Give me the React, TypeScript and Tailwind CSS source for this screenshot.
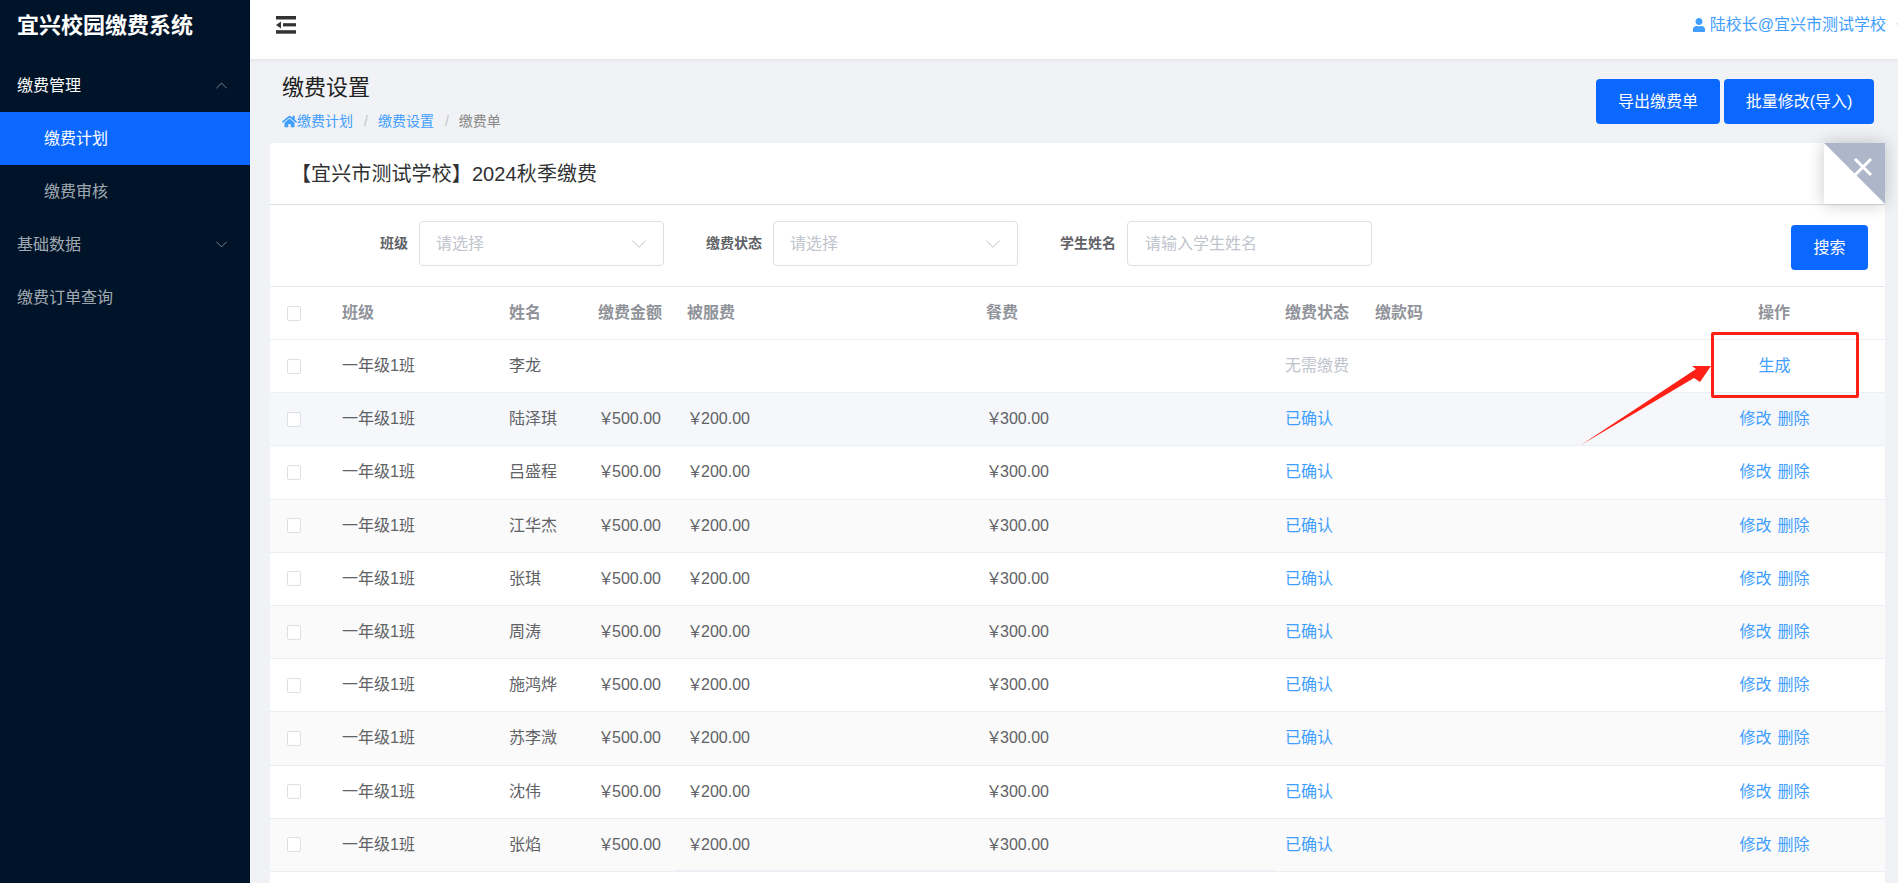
import { ChevronDown, ChevronUp } from "lucide-react";
import { FaHome, FaUser } from "react-icons/fa";

const names = ["陆泽琪", "吕盛程", "江华杰", "张琪", "周涛", "施鸿烨", "苏李溦", "沈伟", "张焰"];
const grid =
  "grid grid-cols-[72px_167px_89px_89px_299px_299px_90px_288px_222px] items-center border-b border-[#ebeef5] text-[16px]";

function Checkbox() {
  return <span className="ml-[17px] block h-[15px] w-[14px] rounded-[2px] border border-[#dcdfe6] bg-white" />;
}

function Select({ width }: { width: string }) {
  return (
    <div className={`${width} flex h-[45px] items-center justify-between rounded-[4px] border border-[#dcdfe6] bg-white pl-[16px] pr-[11px]`}>
      <span className="text-[16px] text-[#c0c4cc]">请选择</span>
      <ChevronDown size={26} strokeWidth={0.7} className="text-[#a8adb8]" />
    </div>
  );
}

function Money({ value }: { value: string }) {
  return (
    <span>
      <span className="tracking-[-2px]">￥</span>
      {value}
    </span>
  );
}

function Row({ name, bg }: { name: string; bg: string }) {
  return (
    <div className={`${grid} h-[53.2px] text-[#606266] ${bg}`}>
      <Checkbox />
      <span>一年级1班</span>
      <span>{name}</span>
      <Money value="500.00" />
      <Money value="200.00" />
      <Money value="300.00" />
      <span className="text-[#409eff]">已确认</span>
      <span />
      <span className="ml-[1px] flex justify-center gap-[6px] text-[#409eff]">
        <span>修改</span>
        <span>删除</span>
      </span>
    </div>
  );
}

export default function App() {
  return (
    <div className="relative flex h-[883px] w-[1898px] overflow-hidden bg-[#f0f2f5] [font-family:'Liberation_Sans','Noto_Sans_CJK_SC',sans-serif]">
      <aside className="w-[250px] shrink-0 bg-[#001429] text-[16px] text-[#ffffffa6]">
        <div className="h-[59px] pl-[17px] pt-[10px] text-[22px] font-bold leading-8 text-white">宜兴校园缴费系统</div>
        <div className="flex h-[53px] items-center justify-between pl-[17px] pr-[19px] text-white">
          <span>缴费管理</span>
          <ChevronUp size={19} strokeWidth={1} className="text-[#ffffff99]" />
        </div>
        <div className="flex h-[53px] items-center bg-[#0b68ff] pl-[44px] text-white">缴费计划</div>
        <div className="flex h-[53px] items-center pl-[44px]">缴费审核</div>
        <div className="flex h-[53px] items-center justify-between pl-[17px] pr-[19px]">
          <span>基础数据</span>
          <ChevronDown size={19} strokeWidth={1} className="text-[#ffffff99]" />
        </div>
        <div className="flex h-[53px] items-center pl-[17px]">缴费订单查询</div>
      </aside>

      <main className="flex min-w-0 flex-1 flex-col">
        <header className="flex h-[59px] shrink-0 items-start justify-between bg-white pl-[26px] shadow-[0_1px_4px_rgba(0,21,41,0.08)]">
          <svg width="20" height="18" viewBox="0 0 20 18" className="mt-[16px] fill-[#333]">
            <rect x="0" y="0" width="20" height="3.5" />
            <path d="M0 9 L5 5.5 V12.5 Z" />
            <rect x="7" y="7.2" width="13" height="3.2" />
            <rect x="0" y="14.2" width="20" height="3.5" />
          </svg>
          <div className="mr-[-8px] flex h-[50px] items-center text-[16px] text-[#409eff]">
            <FaUser size={14} className="mr-[4px]" />
            <span>陆校长@宜兴市测试学校</span>
            <ChevronDown size={12} strokeWidth={1} className="ml-[8px] text-[#888]" />
          </div>
        </header>

        <div className="flex h-[84px] shrink-0 justify-between pl-[32px] pr-[24px]">
          <div className="pt-[14px]">
            <div className="text-[22px] leading-[30px] text-[#222]">缴费设置</div>
            <div className="mt-[8px] flex h-[20px] items-center text-[14px] text-[#409eff]">
              <FaHome size={15} />
              <span>缴费计划</span>
              <span className="ml-[11px] mr-[10px] text-[#c0c4cc]">/</span>
              <span>缴费设置</span>
              <span className="ml-[11px] mr-[10px] text-[#c0c4cc]">/</span>
              <span className="text-[#888]">缴费单</span>
            </div>
          </div>
          <div className="flex gap-[4px] pt-[20px]">
            <button className="h-[45px] w-[124px] rounded-[4px] bg-[#0b68ff] text-[16px] text-white">导出缴费单</button>
            <button className="h-[45px] w-[150px] rounded-[4px] bg-[#0b68ff] text-[16px] text-white">批量修改(导入)</button>
          </div>
        </div>

        <section className="relative ml-[20px] mr-[13px] flex-1 rounded-t-[4px] bg-white">
          <div className="flex h-[62px] items-center border-b border-[#dcdfe6] pl-[21px] text-[20px] tracking-[0.1px] text-[#303133]">
            【宜兴市测试学校】2024秋季缴费
          </div>

          <div className="absolute right-0 top-0 h-[61px] w-[61px] shadow-[0_0_16px_rgba(0,0,0,0.22)]">
            <svg width="61" height="61" viewBox="0 0 61 61">
              <rect width="61" height="61" fill="#ffffff" />
              <path d="M0 0 H61 V61 Z" fill="#adb7c9" />
              <path d="M31 16 L47 32 M47 16 L31 32" stroke="#ffffff" strokeWidth="3" />
            </svg>
          </div>

          <div className="flex h-[82px] items-start border-b border-[#e4e7ed] pt-[16px] text-[#606266]">
            <label className="flex h-[45px] w-[139px] items-center justify-end pr-[1px] text-[14px] font-bold">班级</label>
            <div className="ml-[10px]"><Select width="w-[245px]" /></div>
            <label className="flex h-[45px] w-[99px] items-center justify-end pr-[1px] text-[14px] font-bold">缴费状态</label>
            <div className="ml-[10px]"><Select width="w-[245px]" /></div>
            <label className="flex h-[45px] w-[99px] items-center justify-end pr-[1px] text-[14px] font-bold">学生姓名</label>
            <div className="ml-[10px] flex h-[45px] w-[245px] items-center rounded-[4px] border border-[#dcdfe6] pl-[17px] text-[16px] text-[#c0c4cc]">
              请输入学生姓名
            </div>
            <button className="ml-auto mr-[17px] mt-[4px] h-[45px] w-[77px] rounded-[4px] bg-[#0b68ff] text-[16px] text-white">搜索</button>
          </div>

          <div className={`${grid} h-[53px] font-bold text-[#909399]`}>
            <Checkbox />
            <span>班级</span>
            <span>姓名</span>
            <span>缴费金额</span>
            <span>被服费</span>
            <span>餐费</span>
            <span>缴费状态</span>
            <span>缴款码</span>
            <span className="text-center">操作</span>
          </div>

          <div className={`${grid} h-[53.2px] bg-white text-[#606266]`}>
            <Checkbox />
            <span>一年级1班</span>
            <span>李龙</span>
            <span />
            <span />
            <span />
            <span className="text-[#c0c4cc]">无需缴费</span>
            <span />
            <span className="ml-[1px] text-center text-[#409eff]">生成</span>
          </div>
          {names.map((n, i) => (
            <Row key={n} name={n} bg={i === 0 ? "bg-[#f5f7fa]" : i % 2 === 1 ? "bg-white" : "bg-[#fafafa]"} />
          ))}
          <div className="absolute left-[405px] top-[727px] h-[2px] w-[600px] bg-[#eceef4]" />
        </section>
      </main>

      <div className="absolute left-[1711px] top-[332px] h-[66px] w-[148px] rounded-[2px] border-[3px] border-[#ff2015]" />
      <svg width="140" height="90" viewBox="0 0 140 90" className="absolute left-[1578px] top-[360px]">
        <path d="M3 85 L116 18 L122 22 L133 6 L114 6 L118 9 Z" fill="#ff2015" />
      </svg>
    </div>
  );
}
